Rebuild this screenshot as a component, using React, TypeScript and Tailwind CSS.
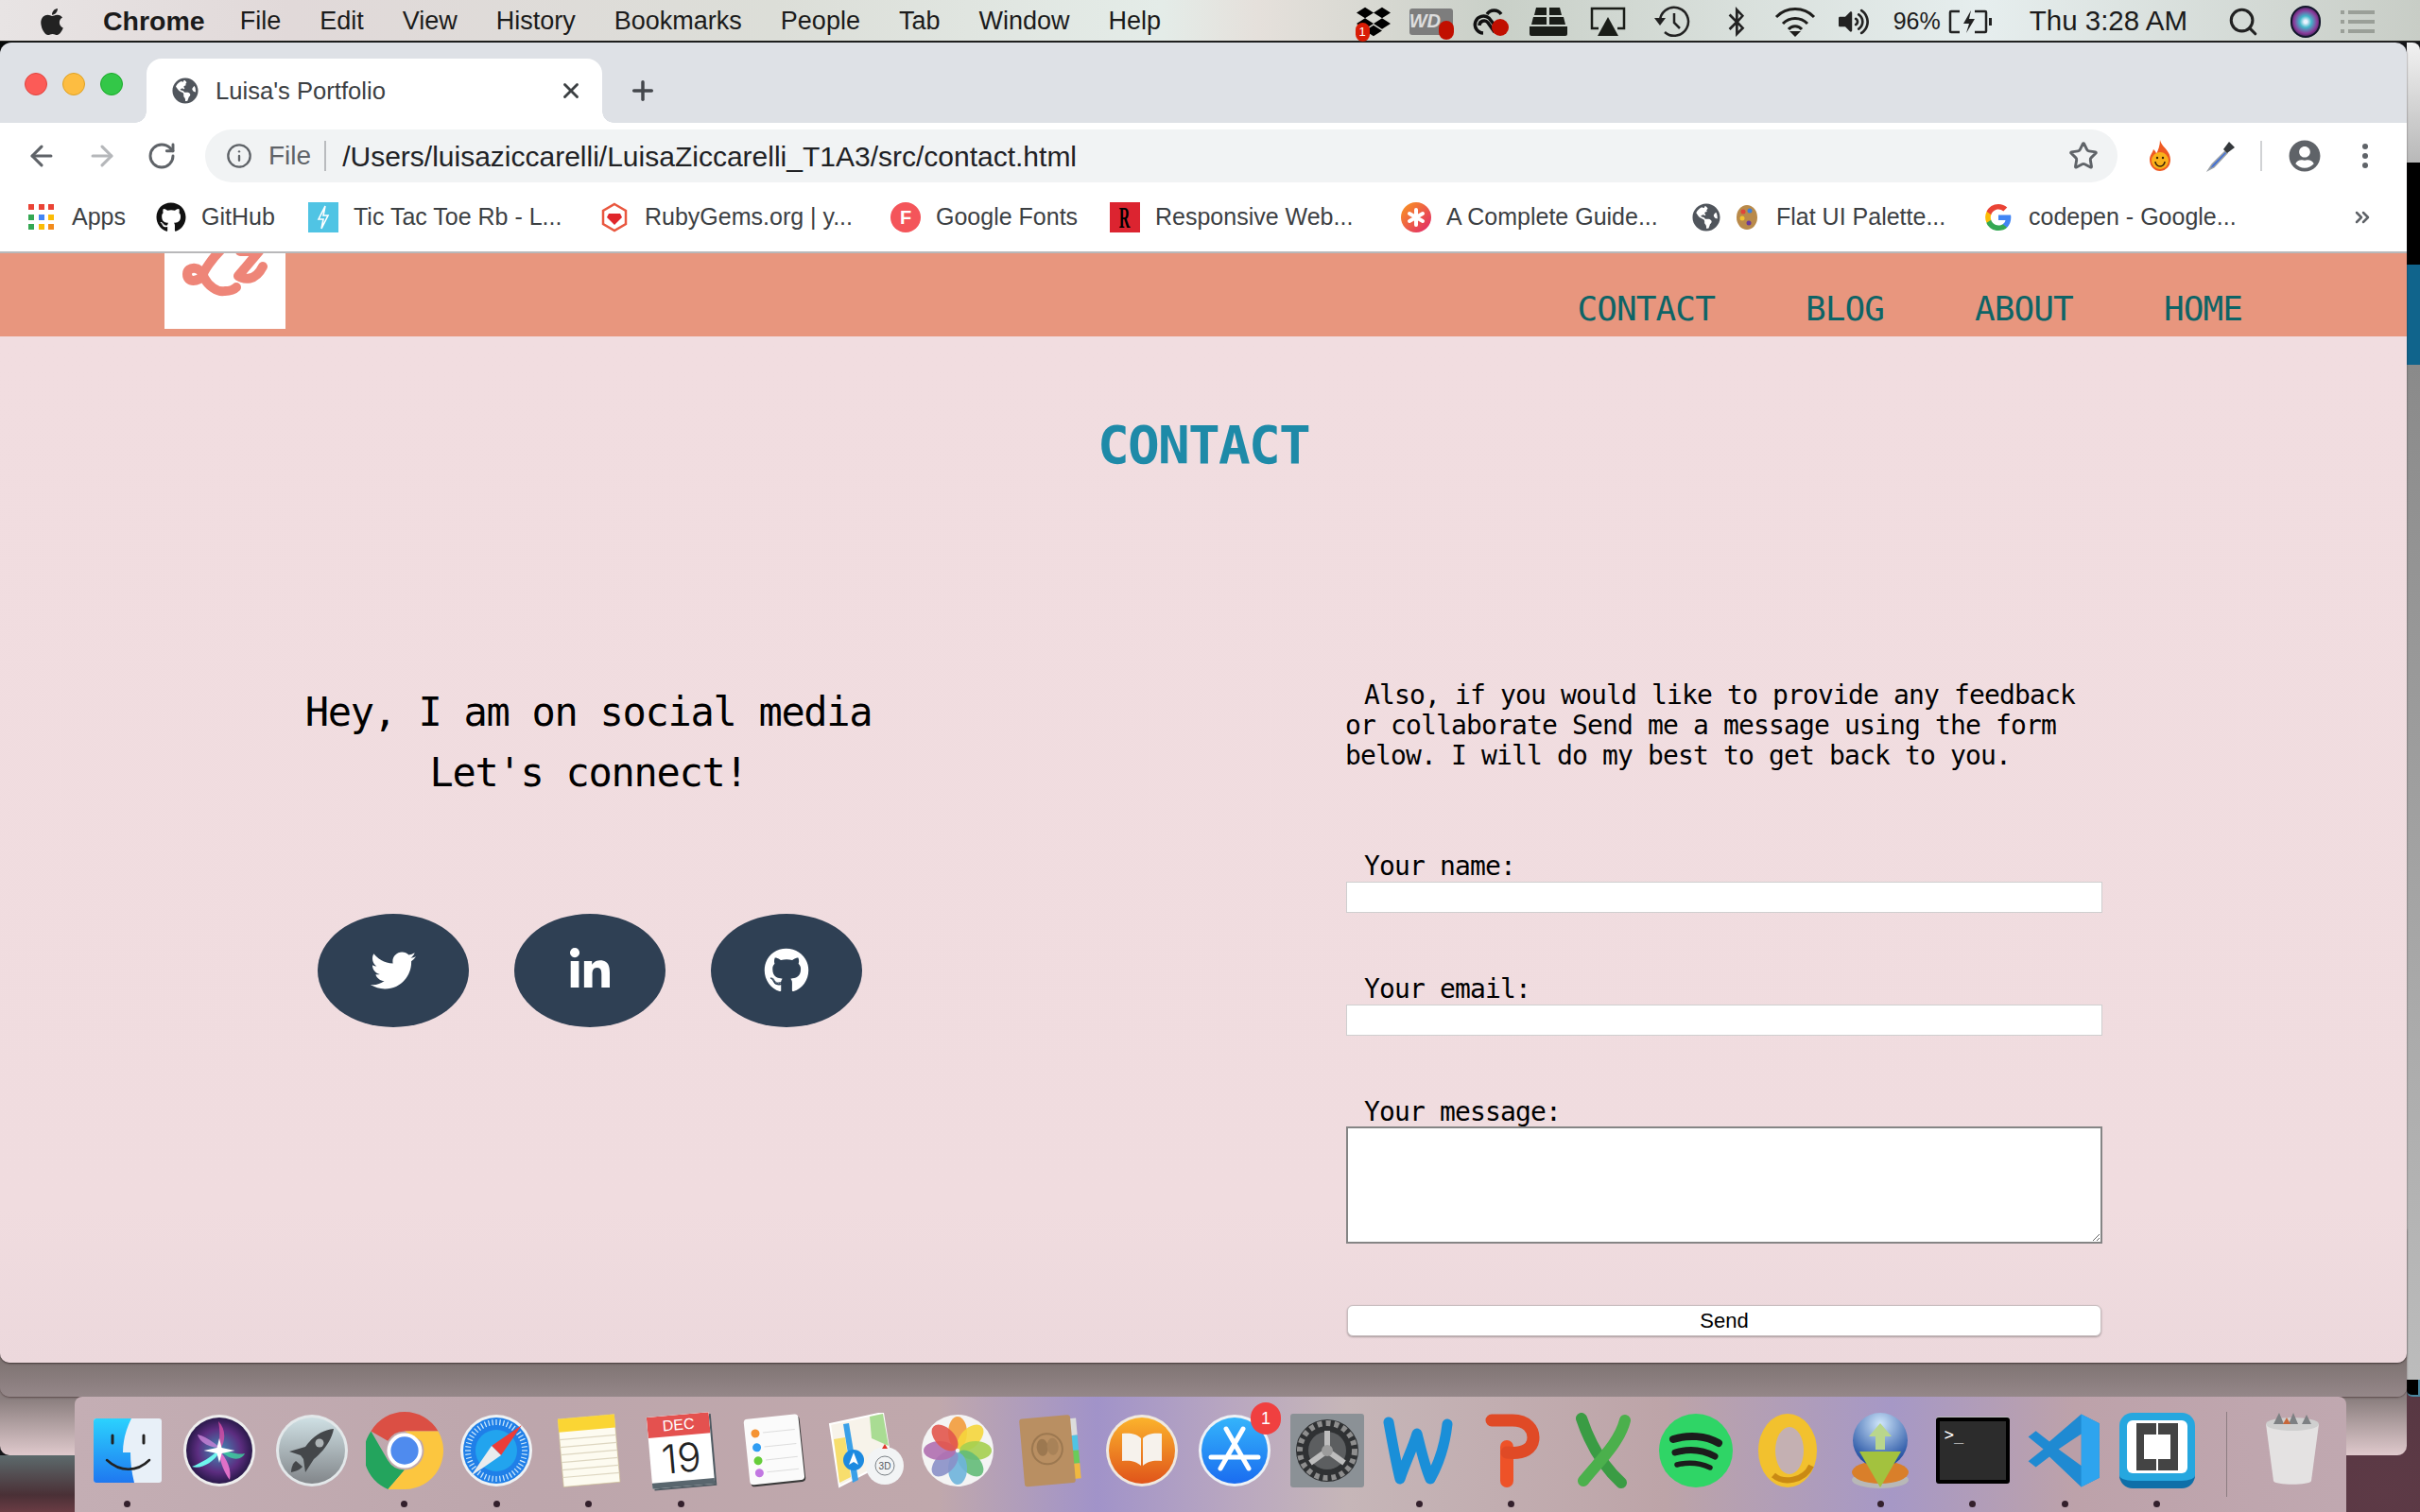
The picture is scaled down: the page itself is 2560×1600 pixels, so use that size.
import { ArrowLeft, ArrowRight, ChevronsRight, Info, Plus, RotateCw, Search, Star, X } from 'lucide-react'
import { FaApple, FaBluetoothB, FaDropbox, FaGithub, FaGlobeAmericas, FaLinkedinIn, FaTwitter, FaUserCircle, FaVolumeUp } from 'react-icons/fa'
import type { ReactNode } from 'react'

const mono = "font-['DejaVu_Sans_Mono',monospace]"

/* ---------- menu bar ---------- */

const menus = ['File', 'Edit', 'View', 'History', 'Bookmarks', 'People', 'Tab', 'Window', 'Help']

const Slot = ({ w, children }: { w: string; children: ReactNode }) => (
  <div className={`${w} flex shrink-0 items-center justify-center`}>{children}</div>
)

const MenuBar = () => (
  <div className="flex h-[44px] items-center border-b border-[#2a2a26] bg-[linear-gradient(90deg,#e8e4e4_0%,#e1d9d9_12%,#dcded8_32%,#e4ece8_48%,#e5e0db_52%,#c9d0c8_62%,#d9e0dc_72%,#e6eeee_82%,#c8cdc6_100%)] pt-[2px] text-[27px] text-[#1b1b1b]">
    <FaApple className="ml-[39px] w-[32px] text-[32px] text-[#222]" />
    <span className="ml-[38px] text-[28.500px] font-bold">Chrome</span>
    <div className="ml-[37px] flex gap-[41px]">
      {menus.map((m) => (
        <span key={m}>{m}</span>
      ))}
    </div>
    <div className="ml-auto flex items-center pr-[48px]">
      <Slot w="w-[60px]">
        <div className="relative">
          <FaDropbox className="text-[36px] text-black" />
          <span className="absolute -left-[1px] bottom-[-3px] flex h-[20px] w-[15px] items-center justify-center rounded-full bg-[#d91c05] text-[13px] text-white">1</span>
        </div>
      </Slot>
      <Slot w="w-[62px]">
        <div className="relative h-[28px] w-[46px] rounded-[3px] bg-[#7d7d7d] text-[20px] font-bold italic leading-[26px] text-[#ddd]">
          WD
          <span className="absolute -bottom-[5px] -right-[1px] h-[20px] w-[16px] rounded-full bg-[#c10f00]" />
        </div>
      </Slot>
      <Slot w="w-[63px]">
        <svg width="42" height="32" viewBox="0 0 42 32">
          <path d="M14 28a9 9 0 1 1 6-16l8 10M10 20a5 5 0 0 1 9-3l7 10M18 8a9 9 0 0 1 15 0" fill="none" stroke="#111" strokeWidth="3.5" />
          <circle cx="32" cy="22" r="9" fill="#c10f00" />
        </svg>
      </Slot>
      <Slot w="w-[60px]">
        <svg width="42" height="30" viewBox="0 0 42 30" fill="#1a1d18">
          <path d="M8 0h11v8H6zM22 0h11l2 8H22zM5 10h14v8H3zM22 10h15l2 8H22zM1 20h40v8a2 2 0 0 1-2 2H3a2 2 0 0 1-2-2z" />
        </svg>
      </Slot>
      <Slot w="w-[66px]">
        <svg width="38" height="32" viewBox="0 0 38 32" fill="none">
          <path d="M9 23H2V2h34v21h-7" stroke="#1a1d18" strokeWidth="2.5" />
          <path d="M19 11l11 20H8z" fill="#1a1d18" />
        </svg>
      </Slot>
      <Slot w="w-[71px]">
        <svg width="40" height="34" viewBox="0 0 40 34" fill="none" stroke="#222" strokeWidth="2.5">
          <path d="M7 17a15 15 0 1 1 5 11" />
          <path d="M22 8v10l6 6" />
          <path d="M1 13h12l-6 8z" fill="#222" stroke="none" />
        </svg>
      </Slot>
      <Slot w="w-[64px]">
        <FaBluetoothB className="text-[32px] text-[#222]" />
      </Slot>
      <Slot w="w-[60px]">
        <svg width="44" height="32" viewBox="0 0 44 32" fill="none" stroke="#1d1d1b" strokeWidth="3">
          <path d="M2 11a28 28 0 0 1 40 0M9 18a18 18 0 0 1 26 0M15 24a9 9 0 0 1 14 0" />
          <path d="M16 26h12l-6 6z" fill="#1d1d1b" stroke="none" />
        </svg>
      </Slot>
      <Slot w="w-[64px]">
        <FaVolumeUp className="text-[32px] text-[#222]" />
      </Slot>
      <span className="ml-[10px] text-[25px]">96%</span>
      <svg className="ml-[8px]" width="46" height="26" viewBox="0 0 46 26" fill="none">
        <path d="M12 2H3a1 1 0 0 0-1 1v20a1 1 0 0 0 1 1h9M28 2h11a1 1 0 0 1 1 1v20a1 1 0 0 1-1 1H28" stroke="#222" strokeWidth="2.5" />
        <path d="M24 1l-8 14h6l-3 10 9-15h-6z" fill="#222" />
        <path d="M43 9h3v8h-3z" fill="#222" />
      </svg>
      <span className="ml-[40px] text-[29.500px]">Thu 3:28 AM</span>
      <Search className="ml-[42px] h-[34px] w-[34px] text-[#222]" strokeWidth={2.2} />
      <div className="ml-[33px] h-[34px] w-[32px] rounded-full border-2 border-[#12162a] bg-[radial-gradient(circle,#e9f3ff_8%,#42b6c9_30%,#8a3b9a_60%,#0c1230_90%)]" />
      <div className="ml-[21px] flex w-[36px] flex-col gap-[6px]">
        {[0, 1, 2].map((i) => (
          <div key={i} className="flex gap-[4px]">
            <span className="h-[4px] w-[4px] bg-[#9a9f98]" />
            <span className="h-[4px] w-[28px] bg-[#9a9f98]" />
          </div>
        ))}
      </div>
    </div>
  </div>
)

/* ---------- browser chrome ---------- */

const TabStrip = () => (
  <div className="flex h-[85px] items-end bg-[#dee1e6]">
    <div className="mb-[29px] ml-[26px] flex gap-[16px] self-end">
      <span className="h-[24px] w-[24px] rounded-full border border-[#e0443e] bg-[#fc5b57]" />
      <span className="h-[24px] w-[24px] rounded-full border border-[#dea123] bg-[#fdbd41]" />
      <span className="h-[24px] w-[24px] rounded-full border border-[#1aab29] bg-[#33c748]" />
    </div>
    <div className="relative ml-[25px] flex h-[68px] w-[482px] items-center rounded-t-[16px] bg-white pl-[27px]">
      <span className="absolute bottom-0 -left-[12px] h-[12px] w-[12px] bg-[radial-gradient(circle_at_0_0,transparent_11.5px,white_12px)]" />
      <span className="absolute bottom-0 -right-[12px] h-[12px] w-[12px] bg-[radial-gradient(circle_at_100%_0,transparent_11.5px,white_12px)]" />
      <FaGlobeAmericas className="text-[28px] text-[#50555c]" />
      <span className="ml-[18px] text-[25.6px] text-[#3c4043]">Luisa's Portfolio</span>
      <X className="ml-auto mr-[20px] h-[26px] w-[26px] text-[#3c4043]" strokeWidth={2.6} />
    </div>
    <Plus className="mb-[18px] ml-[27px] h-[32px] w-[32px] text-[#44474c]" strokeWidth={2.6} />
  </div>
)

const Toolbar = () => (
  <div className="flex h-[70px] items-center bg-white">
    <ArrowLeft className="ml-[27px] h-[34px] w-[34px] text-[#5f6368]" strokeWidth={2.2} />
    <ArrowRight className="ml-[30px] h-[34px] w-[34px] text-[#b5b7ba]" strokeWidth={2.2} />
    <RotateCw className="ml-[30px] h-[32px] w-[32px] text-[#5f6368]" strokeWidth={2.2} />
    <div className="ml-[30px] flex h-[56px] w-[2023px] items-center rounded-full bg-[#f1f3f4] pl-[22px]">
      <Info className="h-[28px] w-[28px] text-[#5f6368]" strokeWidth={2} />
      <span className="ml-[17px] text-[28px] text-[#5f6368]">File</span>
      <span className="ml-[14px] h-[32px] w-[2px] bg-[#b9bbbe]" />
      <span className="ml-[17px] text-[30px] text-[#202124]">/Users/luisaziccarelli/LuisaZiccarelli_T1A3/src/contact.html</span>
      <Star className="ml-auto mr-[20px] h-[32px] w-[32px] text-[#5f6368]" strokeWidth={2.2} />
    </div>
    {/* extensions */}
    <svg className="ml-[30px]" width="30" height="34" viewBox="0 0 30 34">
      <path d="M15 0c1 7 11 11 11 21a11 12 0 0 1-22 0c0-5 3-7 4-11 2 2 3 3 3 5 2-4 4-9 4-15z" fill="#ef5a22" />
      <circle cx="15" cy="22" r="9" fill="#f9b11a" />
      <path d="M10 23a5 5 0 0 0 10 0" fill="none" stroke="#3a2405" strokeWidth="1.6" />
      <circle cx="12" cy="19" r="1.2" fill="#3a2405" />
      <circle cx="18" cy="19" r="1.2" fill="#3a2405" />
    </svg>
    <svg className="ml-[32px]" width="34" height="34" viewBox="0 0 34 34">
      <path d="M22 12L8 26l-4 6 6-3L24 14z" fill="#3f6fd8" stroke="#9aa0a6" strokeWidth="1.5" />
      <path d="M20 10l6-8 6 6-8 6z" fill="#34383c" />
    </svg>
    <span className="ml-[25px] h-[32px] w-[2px] bg-[#d0d2d4]" />
    <FaUserCircle className="ml-[28px] text-[34px] text-[#5f6368]" />
    <div className="ml-[44px] flex flex-col gap-[4px]">
      <span className="h-[6px] w-[6px] rounded-full bg-[#5f6368]" />
      <span className="h-[6px] w-[6px] rounded-full bg-[#5f6368]" />
      <span className="h-[6px] w-[6px] rounded-full bg-[#5f6368]" />
    </div>
  </div>
)

const AppsIcon = () => (
  <div className="grid h-[28px] w-[28px] grid-cols-3 gap-[4px]">
    {['#ea4335', '#ea4335', '#ea4335', '#34a853', '#4285f4', '#fbbc05', '#34a853', '#fbbc05', '#f28b1c'].map((c, i) => (
      <span key={i} className="h-[6px] w-[6px]" style={{ backgroundColor: c }} />
    ))}
  </div>
)

const bookmarks: { w: string; label: string; icon: ReactNode }[] = [
  { w: 'w-[137px]', label: 'Apps', icon: <AppsIcon /> },
  { w: 'w-[161px]', label: 'GitHub', icon: <FaGithub className="text-[32px] text-[#111]" /> },
  {
    w: 'w-[308px]',
    label: 'Tic Tac Toe Rb - L...',
    icon: (
      <div className="flex h-[32px] w-[32px] items-center justify-center bg-[#50c4e4]">
        <svg width="14" height="26" viewBox="0 0 14 26" fill="none" stroke="white" strokeWidth="1.6">
          <path d="M9 1L2 15h5l-2 10 7-14H7z" />
        </svg>
      </div>
    ),
  },
  {
    w: 'w-[308px]',
    label: 'RubyGems.org | y...',
    icon: (
      <svg width="32" height="32" viewBox="0 0 32 32">
        <path d="M16 2l12 7v14l-12 7-12-7V9z" fill="none" stroke="#e9573f" strokeWidth="2.5" />
        <path d="M10 12h12l2 4-8 8-8-8z" fill="#e0262b" />
      </svg>
    ),
  },
  {
    w: 'w-[232px]',
    label: 'Google Fonts',
    icon: <div className="flex h-[32px] w-[32px] items-center justify-center rounded-full bg-[#f4555a] text-[20px] font-bold text-white">F</div>,
  },
  {
    w: 'w-[308px]',
    label: 'Responsive Web...',
    icon: (
      <div className="flex h-[32px] w-[32px] items-center justify-center bg-[#dc2430] font-['Liberation_Serif',serif] text-[32px] font-bold leading-none text-black">
        <span className="scale-x-50">R</span>
      </div>
    ),
  },
  {
    w: 'w-[308px]',
    label: 'A Complete Guide...',
    icon: (
      <div className="flex h-[32px] w-[32px] items-center justify-center rounded-full bg-[linear-gradient(135deg,#fb9a1e,#e0246e)]">
        <svg width="22" height="22" viewBox="0 0 22 22" stroke="white" strokeWidth="4" strokeLinecap="round">
          <path d="M11 3v16M4 7l14 8M18 7L4 15" />
        </svg>
      </div>
    ),
  },
]

const BookmarksBar = () => (
  <div className="flex h-[68px] items-center border-b-2 border-[#b8b8ba] bg-white pb-[6px] pl-[28px] text-[25px] text-[#3c4043]">
    {bookmarks.map((b) => (
      <div key={b.label} className={`${b.w} flex shrink-0 items-center gap-[16px]`}>
        <div className="flex h-[32px] w-[32px] items-center justify-center">{b.icon}</div>
        <span className="whitespace-nowrap">{b.label}</span>
      </div>
    ))}
    <div className="flex w-[308px] shrink-0 items-center">
      <FaGlobeAmericas className="text-[30px] text-[#50555c]" />
      <svg className="ml-[15px]" width="26" height="28" viewBox="0 0 26 28">
        <ellipse cx="13" cy="14" rx="11" ry="13" fill="#b98a4a" />
        <circle cx="9" cy="8" r="2.5" fill="#e0453a" />
        <circle cx="16" cy="7" r="2.5" fill="#3f7fd8" />
        <circle cx="8" cy="15" r="2.5" fill="#f2c230" />
        <circle cx="15" cy="20" r="2.5" fill="#6a3a9a" />
      </svg>
      <span className="ml-[18px] whitespace-nowrap">Flat UI Palette...</span>
    </div>
    <div className="flex w-[308px] shrink-0 items-center gap-[16px]">
      <svg width="32" height="32" viewBox="0 0 48 48">
        <path d="M44 24.5c0-1.500-.1-2.900-.4-4.300H24v8.200h11.200c-.5 2.600-2 4.800-4.200 6.300v5.300h6.800c4-3.700 6.200-9.100 6.200-15.500z" fill="#4285f4" />
        <path d="M24 45c5.700 0 10.400-1.900 13.800-5l-6.800-5.300c-1.900 1.300-4.300 2-7 2-5.400 0-10-3.600-11.600-8.500h-7v5.400C8.800 40.400 15.800 45 24 45z" fill="#34a853" />
        <path d="M12.400 28.200c-.9-2.600-.9-5.500 0-8.200v-5.400h-7c-2.900 5.700-2.900 12.500 0 18.200z" fill="#fbbc05" />
        <path d="M24 11.300c3 0 5.800 1.100 7.900 3.100l6-6C34.300 5 29.400 3 24 3 15.800 3 8.800 7.600 5.400 14.600l7 5.400C14 15 18.600 11.300 24 11.300z" fill="#ea4335" />
      </svg>
      <span className="whitespace-nowrap">codepen - Google...</span>
    </div>
    <ChevronsRight className="ml-[81px] h-[24px] w-[24px] text-[#5f6368]" strokeWidth={2.5} />
  </div>
)

/* ---------- the page inside the browser ---------- */

const Logo = () => (
  <div className="ml-[174px] h-[80px] w-[128px] overflow-hidden bg-white">
    <svg width="128" height="80" viewBox="0 0 128 80" fill="none" stroke="#ee8578" strokeWidth="10" strokeLinecap="round" strokeLinejoin="round">
      <path d="M60 -4C50 6 42 18 40 24C36 30 24 32 24 22C24 14 38 12 42 26C46 34 56 42 64 40C70 40 74 38 76 36" />
      <path d="M80 -2H100L78 24C84 28 96 30 104 14" />
    </svg>
  </div>
)

const navLinks = ['CONTACT', 'BLOG', 'ABOUT', 'HOME']

const Header = () => (
  <header className="flex h-[88px] items-start bg-[#e8967e]">
    <Logo />
    <nav className={`${mono} ml-auto mr-[174px] mt-[37px] flex gap-[96px] text-[36px] leading-[44px] tracking-[-0.9px] text-[#0e6466]`}>
      {navLinks.map((n) => (
        <span key={n}>{n}</span>
      ))}
    </nav>
  </header>
)

const socials = [
  { name: 'twitter', icon: <FaTwitter className="text-[48px] text-white" /> },
  { name: 'linkedin', icon: <FaLinkedinIn className="text-[48px] text-white" /> },
  { name: 'github', icon: <FaGithub className="text-[48px] text-white" /> },
]

const Field = ({ label, mt }: { label: string; mt: string }) => (
  <div className={mt}>
    <label className="block pl-[19px] leading-[32px] whitespace-pre">{label}</label>
    <input className="block h-[33px] w-full border border-[#cfcfcf] bg-white" />
  </div>
)

const Main = () => (
  <main className={`${mono} flex-1 overflow-hidden bg-[linear-gradient(180deg,#f1dde0_0%,#f0dcdf_85%,#ecd8dc_100%)] text-black`}>
    <h1 className="pt-[83px] text-center text-[56px] font-bold leading-[64px] tracking-[-1.7px] text-[#1e8aa8]">CONTACT</h1>
    <div className="mt-[217px] flex">
      {/* social column */}
      <section className="w-[1248px] pt-[2px] text-center text-[42px] leading-[64px] tracking-[-1.3px]">
        <p className="pr-[3px]">Hey, I am on social media</p>
        <p className="pr-[3px]">Let's connect!</p>
        <div className="mt-[117px] flex justify-center gap-[48px]">
          {socials.map((s) => (
            <a key={s.name} className="flex h-[120px] w-[160px] items-center justify-center rounded-[50%] bg-[#2f4054]">
              {s.icon}
            </a>
          ))}
        </div>
      </section>

      {/* contact form */}
      <section className="ml-[176px] w-[800px] text-[28px] leading-[32px] tracking-[-0.86px]">
        <p className="-ml-px">
          <span className="inline-block w-[20px]" />
          Also, if you would like to provide any feedback
          <br />
          or collaborate Send me a message using the form
          <br />
          below. I will do my best to get back to you.
        </p>
        <Field label="Your name:" mt="mt-[85px]" />
        <Field label="Your email:" mt="mt-[65px]" />
        <div className="mt-[65px]">
          <label className="block pl-[19px] leading-[32px]">Your message:</label>
          <textarea className="-mt-px block h-[124px] w-full border-2 border-[#858585] bg-white" />
        </div>
        <button className="mt-[65px] ml-px block h-[33px] w-[798px] rounded-[6px] border border-[#c8bec0] bg-white text-center font-['Liberation_Sans',sans-serif] text-[22px] leading-[31px] tracking-normal shadow-[0_1px_2px_rgba(0,0,0,0.3)]">
          Send
        </button>
      </section>
    </div>
  </main>
)

/* ---------- dock ---------- */

const ticks = Array.from({ length: 48 }, (_, i) => i * 7.5)

const Finder = () => (
  <svg width="72" height="72" viewBox="0 0 72 72">
    <rect width="72" height="68" y="2" rx="3" fill="#e8f0f8" />
    <path d="M3 2h37c-6 12-9 24-9 36h8c0 10 1 20 4 32H3a3 3 0 0 1-3-3V5a3 3 0 0 1 3-3z" fill="url(#fnd)" />
    <defs>
      <linearGradient id="fnd" x1="0" y1="0" x2="0" y2="1">
        <stop offset="0" stopColor="#2bd2fe" />
        <stop offset="1" stopColor="#1f78f0" />
      </linearGradient>
    </defs>
    <path d="M20 20v8M53 20v8" stroke="#222" strokeWidth="3" strokeLinecap="round" />
    <path d="M14 46c14 13 32 13 45 0" fill="none" stroke="#222" strokeWidth="2.5" strokeLinecap="round" />
  </svg>
)

const Siri = () => (
  <svg width="78" height="78" viewBox="0 0 78 78">
    <defs>
      <radialGradient id="sir" cx="0.5" cy="0.5" r="0.6">
        <stop offset="0" stopColor="#3f8fb8" />
        <stop offset="0.55" stopColor="#5c2d80" />
        <stop offset="1" stopColor="#0b0d2a" />
      </radialGradient>
    </defs>
    <circle cx="39" cy="39" r="38" fill="#eee" />
    <circle cx="39" cy="39" r="35" fill="url(#sir)" />
    <path d="M40 36C30 28 24 24 16 22c2 8 12 14 24 14z" fill="#c985d8" opacity=".8" />
    <path d="M40 37C30 46 20 52 10 56c10 3 22-4 30-16z" fill="#6ff5ee" />
    <path d="M40 38c10 2 18 6 26 4-4 9-18 7-26-4z" fill="#3fd6a0" opacity=".8" />
    <path d="M38 38c2 14 6 24 12 32 2-10-2-22-12-32z" fill="#e070c8" />
    <path d="M36 38c4-10 4-20 2-30 8 8 8 20 2 30z" fill="#e050a8" opacity=".75" />
    <path d="M39 26l2.500 10 14 3-14 3-2.500 10-2.500-10-14-3 14-3z" fill="#fff" />
  </svg>
)

const Launchpad = () => (
  <svg width="78" height="78" viewBox="0 0 78 78">
    <defs>
      <linearGradient id="lau" x1="0" y1="0" x2="0" y2="1">
        <stop offset="0" stopColor="#cfe0e4" />
        <stop offset="1" stopColor="#82868a" />
      </linearGradient>
    </defs>
    <circle cx="39" cy="39" r="38" fill="#e3e8ea" />
    <circle cx="39" cy="39" r="35" fill="url(#lau)" />
    <path d="M62 16c-12 1-22 8-30 19l-17 5 12 4 3 4 2 14 9-14c10-8 19-20 21-32z" fill="#44474a" />
    <path d="M22 50c-3 2-5 7-5 12 5-1 10-3 12-6z" fill="#44474a" />
    <circle cx="47" cy="31" r="4.500" fill="#aeb4b6" />
  </svg>
)

const Chrome = () => (
  <svg width="82" height="82" viewBox="3 3 42 42">
    <path d="M24 3a21 21 0 0 1 18.200 10.500H24a10.500 10.500 0 0 0-9.100 5.300L5.800 13.500A21 21 0 0 1 24 3z" fill="#db4f44" />
    <path d="M5.800 13.500l9.100 15.800A10.500 10.500 0 0 0 24 34.500L15 45A21 21 0 0 1 5.800 13.500z" fill="#23a45d" />
    <path d="M42.200 13.500A21 21 0 0 1 24 45l-9 0 9-10.500a10.500 10.500 0 0 0 9.100-15.700l-9.100-5.300z" fill="#fcc63f" />
    <circle cx="24" cy="24" r="9.500" fill="#fff" />
    <circle cx="24" cy="24" r="7.500" fill="#4f8bee" />
  </svg>
)

const Safari = () => (
  <svg width="78" height="78" viewBox="0 0 78 78">
    <circle cx="39" cy="39" r="38" fill="#eef2f4" />
    <circle cx="39" cy="39" r="35" fill="#1f7fe8" />
    <circle cx="39" cy="39" r="22" fill="#22a4ee" />
    {ticks.map((a) => (
      <path key={a} d="M39 6v6" stroke="#d5ecfb" strokeWidth="1.200" transform={`rotate(${a} 39 39)`} />
    ))}
    <path d="M66 12L34 34l10 10z" fill="#ec3c38" />
    <path d="M12 66l22-32 10 10z" fill="#e9ecee" />
  </svg>
)

const Notes = () => (
  <svg width="72" height="80" viewBox="0 0 72 80">
    <g transform="rotate(-5 36 40)">
      <rect x="6" y="4" width="60" height="72" fill="#fdfbf0" stroke="#c9bb8a" strokeWidth=".6" />
      <rect x="6" y="4" width="60" height="14" fill="#fad534" />
      {[26, 34, 42, 50, 58, 66].map((y) => (
        <path key={y} d={`M6 ${y}h60`} stroke="#ddd6c0" strokeWidth="1.200" />
      ))}
    </g>
  </svg>
)

const CalendarIcon = () => (
  <div className="flex h-[76px] w-[66px] -rotate-[5deg] flex-col overflow-hidden border-b-[6px] border-[#59666e] bg-white shadow-[2px_2px_0_#4e5a62]">
    <div className="flex h-[22px] items-center justify-center bg-[#e4514f] font-['Liberation_Sans',sans-serif] text-[16px] leading-none text-white">DEC</div>
    <div className="flex flex-1 items-center justify-center font-['Inter',sans-serif] text-[42px] font-light leading-none text-[#222]">19</div>
  </div>
)

const Reminders = () => (
  <svg width="70" height="80" viewBox="0 0 70 80">
    <g transform="rotate(-6 35 40)">
      <rect x="8" y="6" width="58" height="70" rx="4" fill="#3a3a3a" />
      <rect x="7" y="4" width="58" height="70" rx="4" fill="#fbfbfb" />
      {[['#f59333', 20], ['#2f9df3', 35], ['#66cd3a', 49], ['#c278e2', 62]].map(([c, y]) => (
        <g key={String(c)}>
          <circle cx="18" cy={Number(y)} r="4.500" fill={String(c)} />
          <path d={`M26 ${Number(y)}h34`} stroke="#ddd" strokeWidth="1" />
        </g>
      ))}
    </g>
  </svg>
)

const MapsIcon = () => (
  <svg width="80" height="80" viewBox="0 0 80 80">
    <path d="M2 12L58 0l8 50-54 28z" fill="#f7f3ea" stroke="#fff" strokeWidth="2" />
    <path d="M44 4l14-3 6 34-18-8z" fill="#a9dc93" />
    <path d="M16 12l6-1 10 60-6 3z" fill="#3aa0e8" />
    <path d="M6 28l12-2 6 42-12 6z" fill="#f6d84e" opacity=".8" />
    <circle cx="27" cy="50" r="11" fill="#1d8ae0" />
    <path d="M27 42l5 13-5-3-5 3z" fill="#fff" />
    <circle cx="60" cy="56" r="20" fill="#f2f4f5" />
    <circle cx="60" cy="56" r="10" fill="none" stroke="#7b8186" strokeWidth="1" />
    <text x="60" y="60" textAnchor="middle" fontSize="10" fill="#50555a" fontFamily="Liberation Sans">3D</text>
    <path d="M60 33l3 5h-6z" fill="#e0352b" />
  </svg>
)

const petals = ['#f39c3c', '#f5d63c', '#a5cf50', '#63bb78', '#6eb4dc', '#8a90c8', '#b06fb0', '#e2574c']

const Photos = () => (
  <svg width="78" height="78" viewBox="0 0 78 78">
    <circle cx="39" cy="39" r="38" fill="#f4f4f4" />
    {petals.map((c, i) => (
      <ellipse key={c} cx="39" cy="20" rx="10" ry="17" fill={c} opacity=".9" transform={`rotate(${i * 45} 39 39)`} />
    ))}
  </svg>
)

const Contacts = () => (
  <svg width="76" height="80" viewBox="0 0 76 80">
    <g transform="rotate(-5 38 40)">
      <rect x="60" y="8" width="8" height="18" fill="#dcdcdc" />
      <rect x="60" y="26" width="8" height="16" fill="#50c4e4" />
      <rect x="60" y="42" width="8" height="14" fill="#6acb5a" />
      <rect x="60" y="56" width="8" height="16" fill="#f0b840" />
      <rect x="8" y="4" width="54" height="72" rx="3" fill="#b98f62" />
      <circle cx="35" cy="38" r="16" fill="none" stroke="#9c7850" strokeWidth="2" />
      <ellipse cx="30" cy="36" rx="6" ry="9" fill="#9c7850" />
      <ellipse cx="41" cy="36" rx="6" ry="9" fill="#a88258" />
    </g>
  </svg>
)

const Books = () => (
  <svg width="78" height="78" viewBox="0 0 78 78">
    <defs>
      <linearGradient id="boo" x1="0" y1="0" x2="0" y2="1">
        <stop offset="0" stopColor="#fbb32c" />
        <stop offset="1" stopColor="#e0541a" />
      </linearGradient>
    </defs>
    <circle cx="39" cy="39" r="38" fill="#efe9e0" />
    <circle cx="39" cy="39" r="35" fill="url(#boo)" />
    <path d="M38 26c-4-5-12-6-20-5v29c8-1 15 0 20 5zM40 26c4-5 12-6 20-5v29c-8-1-15 0-20 5z" fill="#f6f2ec" />
  </svg>
)

const AppStore = () => (
  <div className="relative">
    <svg width="78" height="78" viewBox="0 0 78 78">
      <defs>
        <linearGradient id="aps" x1="0" y1="0" x2="0" y2="1">
          <stop offset="0" stopColor="#34b4fb" />
          <stop offset="1" stopColor="#1a6cf0" />
        </linearGradient>
      </defs>
      <circle cx="39" cy="39" r="38" fill="#eef2f6" />
      <circle cx="39" cy="39" r="35" fill="url(#aps)" />
      <path d="M30 16l24 42M48 16L24 58M14 46h50" stroke="#fff" strokeWidth="5" strokeLinecap="round" />
    </svg>
    <span className="absolute -right-[10px] -top-[12px] flex h-[34px] w-[32px] items-center justify-center rounded-full bg-[#f04040] font-['Liberation_Sans',sans-serif] text-[18px] text-white">1</span>
  </div>
)

const Prefs = () => (
  <svg width="78" height="78" viewBox="0 0 78 78">
    <rect width="78" height="78" rx="3" fill="#8b9196" />
    <circle cx="39" cy="39" r="33" fill="#2f3133" />
    <circle cx="39" cy="39" r="29" fill="none" stroke="#8e8e8e" strokeWidth="6" strokeDasharray="5 4" />
    <circle cx="39" cy="39" r="20" fill="#5c5e60" />
    <path d="M39 39V18M39 39L21 52M39 39l18 13" stroke="#bdbdbd" strokeWidth="6" />
    <circle cx="39" cy="39" r="6" fill="#9c9c9c" />
  </svg>
)

const Word = () => (
  <svg width="80" height="80" viewBox="0 0 80 80" fill="none" strokeLinecap="round" strokeLinejoin="round">
    <path d="M8 10c4 22 8 44 12 60 6-18 14-34 18-48 4 16 8 34 14 48 10-18 16-40 18-58" stroke="#1a8fd8" strokeWidth="11" />
  </svg>
)

const Powerpoint = () => (
  <svg width="70" height="80" viewBox="0 0 70 80" fill="none" strokeLinecap="round">
    <path d="M30 72V36" stroke="#ee5228" strokeWidth="14" />
    <path d="M14 8h22c16 0 22 10 22 18 0 12-10 18-28 16" stroke="#e04a26" strokeWidth="13" />
  </svg>
)

const Excel = () => (
  <svg width="70" height="80" viewBox="0 0 70 80" fill="none" strokeLinecap="round">
    <path d="M12 6c8 24 20 48 42 68" stroke="#3a9c44" strokeWidth="12" />
    <path d="M58 8C52 32 30 52 14 72" stroke="#4bb04c" strokeWidth="12" />
  </svg>
)

const Spotify = () => (
  <svg width="80" height="80" viewBox="0 0 80 80" fill="none" stroke="#1c1c1c" strokeLinecap="round">
    <circle cx="40" cy="40" r="39" fill="#2fd566" stroke="none" />
    <path d="M16 28c16-5 34-4 48 4" strokeWidth="8" />
    <path d="M18 42c14-4 29-3 42 4" strokeWidth="7" />
    <path d="M20 55c12-3 24-2 35 3" strokeWidth="5.500" />
  </svg>
)

const Outlook = () => (
  <svg width="66" height="80" viewBox="0 0 66 80">
    <ellipse cx="33" cy="40" rx="31" ry="39" fill="#f2c12e" />
    <ellipse cx="35" cy="40" rx="15" ry="25" fill="#c4b0b2" />
    <path d="M18 66c10 9 32 7 40-10" fill="none" stroke="#c98a14" strokeWidth="6" />
  </svg>
)

const GlobeApp = () => (
  <svg width="76" height="82" viewBox="0 0 76 82">
    <defs>
      <radialGradient id="glb" cx="0.5" cy="0.2" r="0.8">
        <stop offset="0" stopColor="#cfe6fa" />
        <stop offset="1" stopColor="#12429a" />
      </radialGradient>
    </defs>
    <ellipse cx="38" cy="72" rx="30" ry="9" fill="#b8b8b8" />
    <ellipse cx="38" cy="64" rx="30" ry="12" fill="#d97f2a" />
    <circle cx="38" cy="30" r="29" fill="url(#glb)" />
    <path d="M38 12l12 14h-7v14h-10V26h-7z" fill="#b9d68c" />
    <path d="M16 42h44L38 80z" fill="#a3c23e" />
  </svg>
)

const Terminal = () => (
  <div className="flex h-[70px] w-[78px] flex-col rounded-[3px] border-[4px] border-black bg-[#2c2c2c] pl-[5px] pt-[6px] font-['DejaVu_Sans_Mono',monospace] text-[17px] leading-none text-white shadow-[0_-1px_0_#bbb]">
    &gt;_
  </div>
)

const VSCode = () => (
  <svg width="80" height="80" viewBox="0 0 100 100">
    <path d="M72 2l24 12v72L72 98 30 58 12 72 2 64l20-16L2 32l10-8 18 14z" fill="#1f8ad2" />
    <path d="M72 2l24 12v72L72 98z" fill="#2ea4ee" />
    <path d="M72 28L42 48l30 22z" fill="#b99fa8" />
  </svg>
)

const Brackets = () => (
  <div className="flex h-[80px] w-[80px] items-center justify-center rounded-[14px] border-b-[8px] border-[#0f6fa8] bg-[#26a7df]">
    <div className="flex h-[56px] w-[64px] items-center justify-center rounded-[6px] bg-white">
      <div className="flex h-[50px] w-[44px] flex-col items-center justify-between bg-[#444]">
        <span className="h-[12px] w-[2px] bg-white" />
        <span className="h-[26px] w-[28px] bg-white" />
        <span className="h-[12px] w-[2px] bg-white" />
      </div>
    </div>
  </div>
)

const Trash = () => (
  <svg width="68" height="80" viewBox="0 0 68 80">
    <path d="M6 14l8 60c1 5 39 5 40 0l8-60z" fill="#e4e2e2" />
    <ellipse cx="34" cy="14" rx="28" ry="7" fill="#cfcfcf" />
    <path d="M14 14l6-12 5 12zM30 14l5-12 5 12zM44 14l5-10 5 10z" fill="#7d8083" />
    <path d="M24 14l4-7 4 7z" fill="#c7673a" />
  </svg>
)

const dockApps: { name: string; running?: boolean; icon: ReactNode }[] = [
  { name: 'finder', running: true, icon: <Finder /> },
  { name: 'siri', icon: <Siri /> },
  { name: 'launchpad', icon: <Launchpad /> },
  { name: 'chrome', running: true, icon: <Chrome /> },
  { name: 'safari', running: true, icon: <Safari /> },
  { name: 'notes', running: true, icon: <Notes /> },
  { name: 'calendar', running: true, icon: <CalendarIcon /> },
  { name: 'reminders', icon: <Reminders /> },
  { name: 'maps', icon: <MapsIcon /> },
  { name: 'photos', icon: <Photos /> },
  { name: 'contacts', icon: <Contacts /> },
  { name: 'books', icon: <Books /> },
  { name: 'appstore', icon: <AppStore /> },
  { name: 'prefs', icon: <Prefs /> },
  { name: 'word', running: true, icon: <Word /> },
  { name: 'powerpoint', running: true, icon: <Powerpoint /> },
  { name: 'excel', icon: <Excel /> },
  { name: 'spotify', icon: <Spotify /> },
  { name: 'outlook', icon: <Outlook /> },
  { name: 'globe', running: true, icon: <GlobeApp /> },
  { name: 'terminal', running: true, icon: <Terminal /> },
  { name: 'vscode', running: true, icon: <VSCode /> },
  { name: 'brackets', running: true, icon: <Brackets /> },
]

const DockCell = ({ running, children }: { running?: boolean; children: ReactNode }) => (
  <div className="relative flex h-full w-[97.6px] shrink-0 items-start justify-center pt-[15px]">
    <div className="flex h-[84px] items-center">{children}</div>
    {running && <span className="absolute bottom-[5px] h-[7px] w-[7px] rounded-full bg-[#33202c]" />}
  </div>
)

const Dock = () => (
  <div className="absolute left-[79px] top-[1478px] flex h-[122px] w-[2403px] rounded-t-[8px] bg-[linear-gradient(90deg,#c4aeb4_0%,#bda6ac_20%,#c0a8ac_38%,#a193c9_45%,#b9a7c0_51%,#c6b6b8_56%,#bda4a8_70%,#a698c6_80%,#bda2aa_88%,#c0a8b0_100%)] pl-[7px]">
    {dockApps.map((a) => (
      <DockCell key={a.name} running={a.running}>
        {a.icon}
      </DockCell>
    ))}
    <div className="ml-[24px] mt-[16px] h-[90px] w-[1px] bg-[#8d7d82]" />
    <div className="ml-[35px] flex pt-[15px]">
      <Trash />
    </div>
  </div>
)

/* ---------- desktop ---------- */

export default function App() {
  return (
    <div className="relative h-[1600px] w-[2560px] overflow-hidden bg-[radial-gradient(ellipse_at_2520px_1580px,#5d3a46_0%,#1a1a1e_60%,#050808_100%)] font-['Liberation_Sans',Arial,sans-serif]">
      <MenuBar />

      {/* windows lying behind the browser */}
      <div className="absolute left-0 top-[1540px] h-[60px] w-[79px] bg-[linear-gradient(180deg,#5c6a6c,#4a3036_70%,#6a3c44)]" />
      <div className="absolute left-[2546px] top-[45px] flex h-[1433px] w-[14px] flex-col">
        <div className="h-[127px] rounded-tr-[8px] bg-[linear-gradient(180deg,#f2f2f2,#b8b8b8)]" />
        <div className="h-[108px] bg-black" />
        <div className="h-[106px] bg-[#10648c]" />
        <div className="h-[1074px] bg-[linear-gradient(180deg,#8a8a8a,#bcbcbc)]" />
        <div className="flex-1 rounded-bl-[6px] border-b-2 border-r-2 border-[#4a87a0] bg-black" />
      </div>
      <div className="absolute left-0 top-[1300px] h-[240px] w-[2546px] rounded-b-[10px] bg-[linear-gradient(180deg,#8a7e7e_0%,#8a7e7e_75%,#dfc9cc_100%)]" />
      <div className="absolute left-0 top-[1300px] h-[178px] w-[2546px] rounded-b-[10px] bg-[linear-gradient(180deg,#7f7473_0%,#7f7473_80%,#958789_100%)] shadow-[0_1px_2px_rgba(60,40,40,0.6)]" />

      {/* browser */}
      <div className="absolute left-0 top-[45px] flex h-[1397px] w-[2546px] flex-col overflow-hidden rounded-b-[10px] rounded-t-[12px] shadow-[0_1px_2px_rgba(40,30,30,0.7)]">
        <TabStrip />
        <Toolbar />
        <BookmarksBar />
        <Header />
        <Main />
      </div>

      <Dock />
    </div>
  )
}
